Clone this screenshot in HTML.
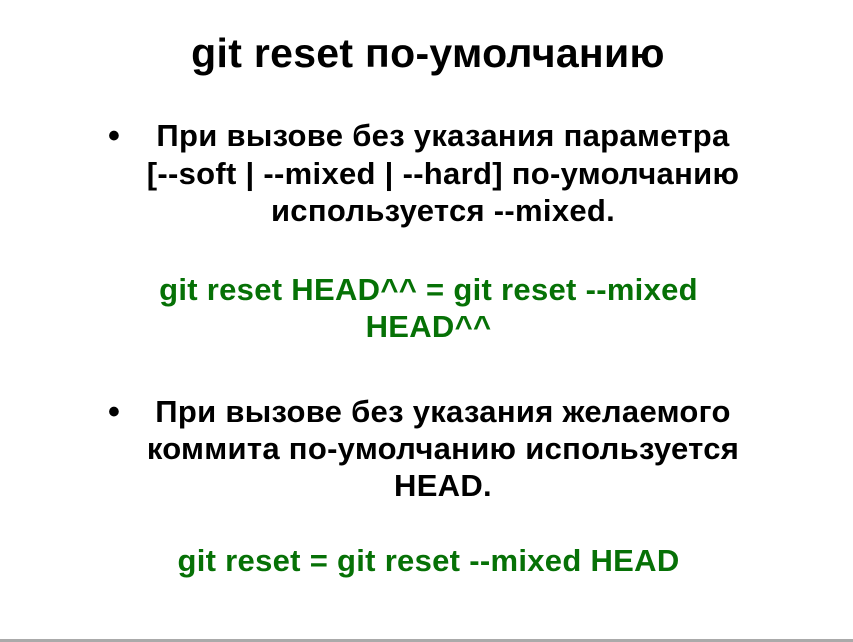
<!DOCTYPE html>
<html><head><meta charset="utf-8"><style>
html,body{margin:0;padding:0;background:#fff;}
body{width:853px;height:642px;position:relative;overflow:hidden;font-family:"Liberation Sans",Arial,sans-serif;font-weight:bold;}
.l{position:absolute;left:0;width:886px;text-align:center;white-space:nowrap;font-size:31px;letter-spacing:0.3px;line-height:36px;color:#000;}
.g{color:#067106;}
.t{position:absolute;left:0;width:856px;text-align:center;font-size:41px;line-height:44px;top:31px;letter-spacing:0.3px;}
.b{position:absolute;left:108px;font-size:34px;line-height:36px;}
.bar{position:absolute;left:0;top:639px;width:853px;height:3px;background:#aaa;}
</style></head><body>
<div class="t">git reset по-умолчанию</div>
<div class="b" style="top:118px">•</div>
<div class="l" style="top:118px">При вызове без указания параметра</div>
<div class="l" style="top:156px">[--soft | --mixed | --hard] по-умолчанию</div>
<div class="l" style="top:193px">используется --mixed.</div>
<div class="l g" style="top:272px;width:857px">git reset HEAD^^ = git reset --mixed</div>
<div class="l g" style="top:309px;width:857px">HEAD^^</div>
<div class="b" style="top:394px">•</div>
<div class="l" style="top:394px">При вызове без указания желаемого</div>
<div class="l" style="top:431px">коммита по-умолчанию используется</div>
<div class="l" style="top:468px">HEAD.</div>
<div class="l g" style="top:543px;width:857px">git reset = git reset --mixed HEAD</div>
<div class="bar"></div>
</body></html>
